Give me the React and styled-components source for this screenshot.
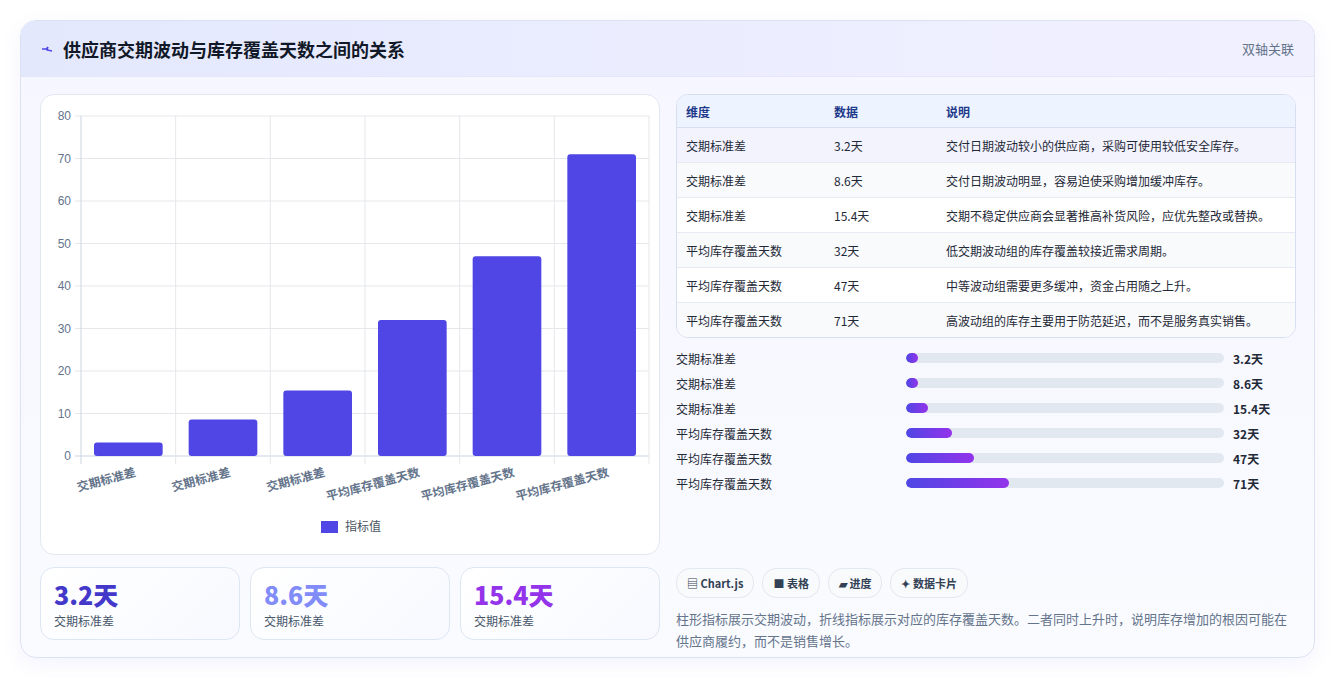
import React from 'react';
import styled, { createGlobalStyle } from 'styled-components';

const Global = createGlobalStyle`
  body { margin: 0; background: #fff; font-family: "Noto Sans CJK SC", "Noto Sans", sans-serif; }
`;

const Page = styled.div`
  padding: 20px 21px 20px 20px;
  height: 678px;
  box-sizing: border-box;
`;

const Card = styled.div`
  border: 1px solid #dbe3f3;
  border-radius: 16px;
  background: linear-gradient(180deg, #f5f6ff 0%, #fafbff 100%);
  box-shadow: 0 6px 20px rgba(99, 102, 241, 0.08);
  overflow: hidden;
  height: 638px;
  box-sizing: border-box;
`;

const Header = styled.div`
  height: 55px;
  display: flex;
  align-items: center;
  justify-content: space-between;
  padding: 0 20px;
  background: linear-gradient(90deg, #e4e8fd 0%, #eceeff 60%, #f1f0ff 100%);
  border-bottom: 1px solid #e3e7f7;
`;

const Title = styled.h1`
  margin: 0;
  font-size: 18px;
  font-weight: 700;
  color: #111827;
  display: flex;
  align-items: center;
  gap: 10px;
`;

const Tag = styled.span`
  font-size: 13px;
  color: #64748b;
`;

const Body = styled.div`
  display: grid;
  grid-template-columns: 620px 620px;
  gap: 16px;
  padding: 17px 19px 0 19px;
`;

const Col = styled.div`
  display: flex;
  flex-direction: column;
`;

const ChartCard = styled.div`
  background: #fff;
  border: 1px solid #e2e8f0;
  border-radius: 14px;
  height: 461px;
  box-sizing: border-box;
`;

const Stats = styled.div`
  display: grid;
  grid-template-columns: repeat(3, 200px);
  gap: 10px;
  margin-top: 12px;
`;

const Stat = styled.div`
  height: 73px;
  box-sizing: border-box;
  border: 1px solid #dde6f3;
  border-radius: 14px;
  background: linear-gradient(135deg, #fff, #f7f9ff);
  padding: 10px 13px;
`;

const StatValue = styled.div`
  font-size: 25px;
  font-weight: 800;
  line-height: 32px;
  color: ${p => p.color};
`;

const StatLabel = styled.div`
  font-size: 12px;
  color: #475569;
  margin-top: 2px;
`;

const Table = styled.table`
  width: 100%;
  border-collapse: separate;
  border-spacing: 0;
  border: 1px solid #d7def0;
  border-radius: 12px;
  overflow: hidden;
  font-size: 12px;
  background: #fff;
`;

const Th = styled.th`
  text-align: left;
  font-weight: 700;
  color: #1e3a8a;
  background: #eef4ff;
  height: 32px;
  padding: 0 9px;
  border-bottom: 1px solid #d7def0;
  width: ${p => p.w || 'auto'};
`;

const Tr = styled.tr`
  background: ${p => (p.hl ? '#f3f3fe' : p.odd ? '#fff' : '#f8fafc')};
`;

const Td = styled.td`
  height: 34px;
  padding: 0 9px;
  color: #1f2937;
  border-bottom: ${p => (p.last ? 'none' : '1px solid #e5eaf3')};
`;

const Bars = styled.div`
  display: flex;
  flex-direction: column;
  gap: 7px;
  margin-top: 11px;
`;

const BarRow = styled.div`
  display: grid;
  grid-template-columns: 230px 318px 1fr;
  align-items: center;
  gap: 0;
  height: 18px;
  font-size: 12px;
  color: #1f2937;
`;

const Track = styled.div`
  height: 10px;
  border-radius: 5px;
  background: #e2e8f0;
  overflow: hidden;
`;

const Fill = styled.div`
  height: 100%;
  border-radius: 5px;
  background: linear-gradient(90deg, #4f46e5, #9333ea);
`;

const Value = styled.span`
  padding-left: 9px;
  font-weight: 700;
`;

const Chips = styled.div`
  display: flex;
  gap: 8px;
  margin-top: 76px;
`;

const Chip = styled.span`
  height: 28px;
  padding: 0 10px;
  display: inline-flex;
  align-items: center;
  gap: 4px;
  border: 1px solid #e2e8f0;
  border-radius: 14px;
  background: #f8fafc;
  font-size: 11px;
  font-weight: 700;
  color: #334155;
`;

const Desc = styled.p`
  margin: 10px 0 0;
  font-size: 13px;
  line-height: 22px;
  color: #64748b;
`;

const labels = ['交期标准差', '交期标准差', '交期标准差', '平均库存覆盖天数', '平均库存覆盖天数', '平均库存覆盖天数'];
const values = [3.2, 8.6, 15.4, 32, 47, 71];
const notes = [
  '交付日期波动较小的供应商，采购可使用较低安全库存。',
  '交付日期波动明显，容易迫使采购增加缓冲库存。',
  '交期不稳定供应商会显著推高补货风险，应优先整改或替换。',
  '低交期波动组的库存覆盖较接近需求周期。',
  '中等波动组需要更多缓冲，资金占用随之上升。',
  '高波动组的库存主要用于防范延迟，而不是服务真实销售。',
];

function BarChart() {
  const x0 = 40, y0 = 361, top = 21, w = 568;
  const step = w / 6;
  const py = v => y0 - (v / 80) * (y0 - top);
  return (
    <svg width="620" height="459" style={{ display: 'block' }}>
      {[0, 10, 20, 30, 40, 50, 60, 70, 80].map(t => (
        <g key={t}>
          <line x1={x0 - 6} x2={x0 + w} y1={py(t)} y2={py(t)} stroke={t === 0 ? '#cbd5e1' : '#e5e7eb'} />
          <text x={x0 - 10} y={py(t) + 4} textAnchor="end" fontSize="12" fill="#64748b" fontFamily="Liberation Sans, sans-serif">{t}</text>
        </g>
      ))}
      {[0, 1, 2, 3, 4, 5, 6].map(i => (
        <line key={i} x1={x0 + i * step} x2={x0 + i * step} y1={top} y2={y0 + 8} stroke={i === 0 ? '#cbd5e1' : '#e5e7eb'} />
      ))}
      {values.map((v, i) => (
        <rect key={i} x={x0 + i * step + 13} y={py(v)} width={step - 26} height={y0 - py(v)} rx="3" fill="#4f46e5" />
      ))}
      {labels.map((l, i) => {
        const cx = x0 + i * step + step / 2 + 8;
        const cy = y0 + 20;
        return (
          <text key={i} x={cx} y={cy} textAnchor="end" fontSize="12" fontWeight="700" fill="#64748b" transform={`rotate(-15 ${cx} ${cy})`}>{l}</text>
        );
      })}
      <rect x="280" y="426" width="17" height="12" fill="#4f46e5" />
      <text x="304" y="436" fontSize="12" fill="#4b5563">指标值</text>
    </svg>
  );
}

export default function App() {
  return (
    <Page>
      <Global />
      <Card>
        <Header>
          <Title>
            <svg width="12" height="10" viewBox="0 0 12 10"><path d="M1 5 L5 5 L7 3 L6 6 L11 7" stroke="#4f46e5" strokeWidth="1.4" fill="none" /></svg>
            供应商交期波动与库存覆盖天数之间的关系
          </Title>
          <Tag>双轴关联</Tag>
        </Header>
        <Body>
          <Col>
            <ChartCard><BarChart /></ChartCard>
            <Stats>
              <Stat><StatValue color="#4338ca">3.2天</StatValue><StatLabel>交期标准差</StatLabel></Stat>
              <Stat><StatValue color="#818cf8">8.6天</StatValue><StatLabel>交期标准差</StatLabel></Stat>
              <Stat><StatValue color="#9333ea">15.4天</StatValue><StatLabel>交期标准差</StatLabel></Stat>
            </Stats>
          </Col>
          <Col>
            <Table>
              <thead>
                <tr><Th w="130px">维度</Th><Th w="94px">数据</Th><Th>说明</Th></tr>
              </thead>
              <tbody>
                {labels.map((l, i) => (
                  <Tr key={i} hl={i === 0} odd={i % 2 === 0}>
                    <Td last={i === 5}>{l}</Td>
                    <Td last={i === 5}>{values[i]}天</Td>
                    <Td last={i === 5}>{notes[i]}</Td>
                  </Tr>
                ))}
              </tbody>
            </Table>
            <Bars>
              {labels.map((l, i) => (
                <BarRow key={i}>
                  <span>{l}</span>
                  <Track><Fill style={{ width: `${Math.max(12, (values[i] / 220) * 318)}px` }} /></Track>
                  <Value>{values[i]}天</Value>
                </BarRow>
              ))}
            </Bars>
            <Chips>
              <Chip>▤ Chart.js</Chip>
              <Chip>■ 表格</Chip>
              <Chip>▰ 进度</Chip>
              <Chip>✦ 数据卡片</Chip>
            </Chips>
            <Desc>柱形指标展示交期波动，折线指标展示对应的库存覆盖天数。二者同时上升时，说明库存增加的根因可能在供应商履约，而不是销售增长。</Desc>
          </Col>
        </Body>
      </Card>
    </Page>
  );
}
